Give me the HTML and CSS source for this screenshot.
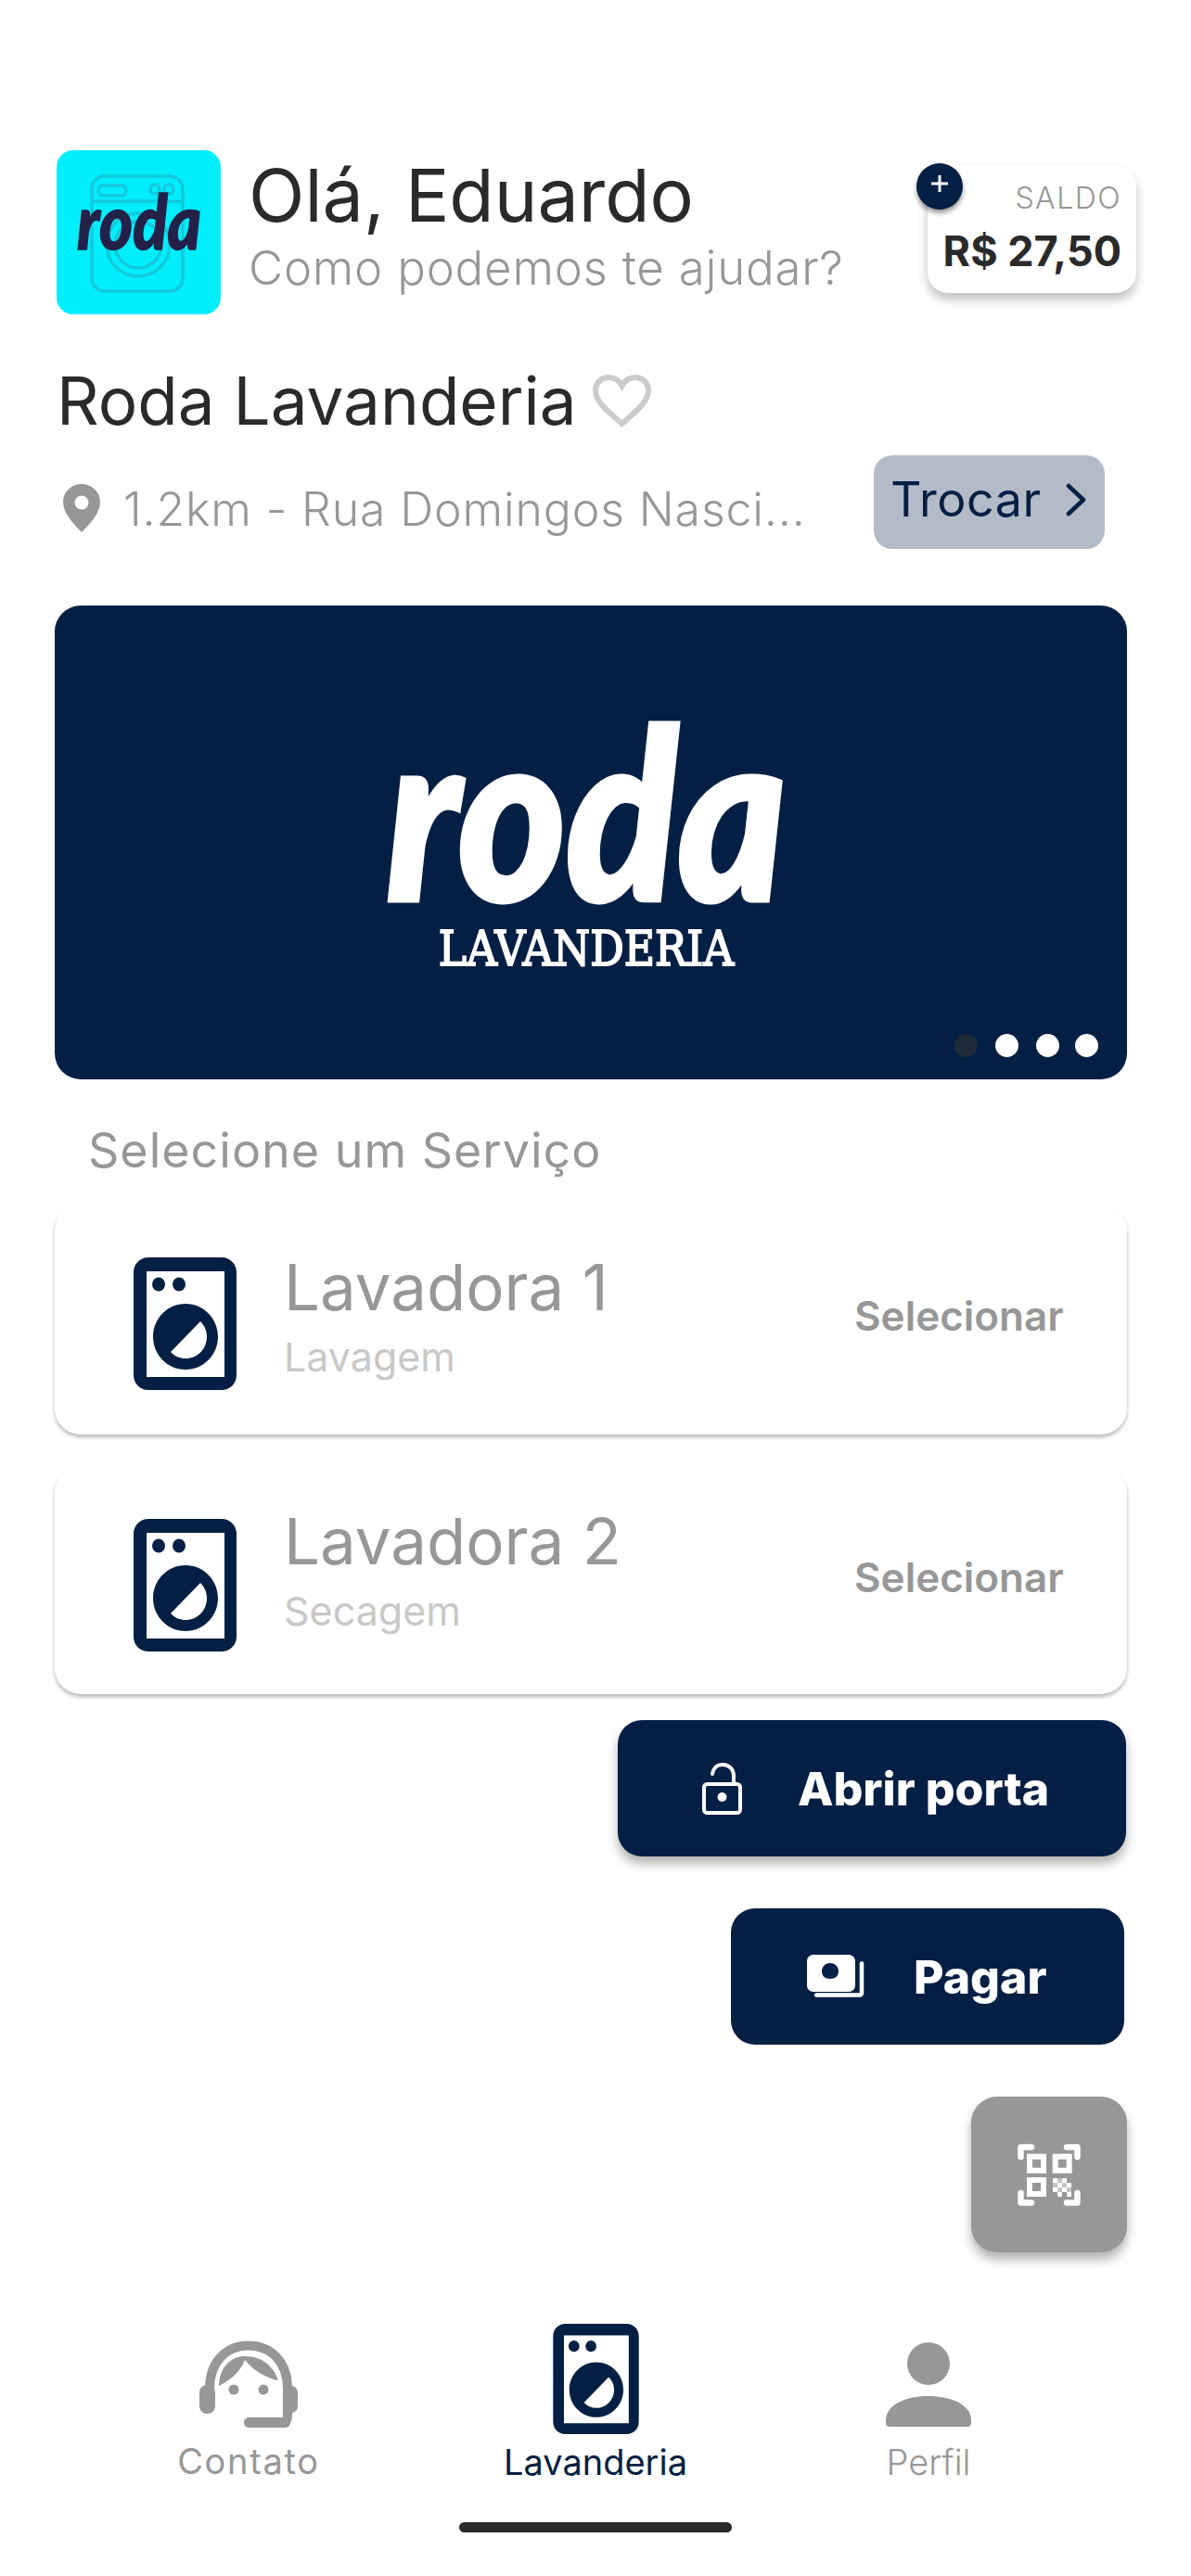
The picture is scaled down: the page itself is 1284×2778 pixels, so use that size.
FILE: index.html
```html
<!DOCTYPE html>
<html lang="pt-BR">
<head>
  <meta charset="UTF-8" />
  <meta name="viewport" content="width=device-width, initial-scale=1.0" />
  <title>Roda Lavanderia</title>
  <link rel="stylesheet" href="styles.css">
</head>
<body>
  <svg class="defs" width="0" height="0">
    <symbol id="washer" viewBox="0 0 111 143">
      <path fill-rule="evenodd" d="M16 0H95C104 0 111 7 111 16V127C111 136 104 143 95 143H16C7 143 0 136 0 127V16C0 7 7 0 16 0ZM14 15V129H98V15Z"/>
      <ellipse cx="27" cy="29" rx="7" ry="7.5"/>
      <ellipse cx="49" cy="29" rx="7" ry="7.5"/>
      <path fill-rule="evenodd" d="M56 50C75.500 50 91 66 91 85.500C91 105 75.500 121 56 121C36.500 121 21 105 21 85.500C21 66 36.500 50 56 50ZM72 69L40 102C45 107 50 109 56 109C69 109 79 98.500 79 85.500C79 79 76.500 73.500 72 69Z"/>
    </symbol>
  </svg>

  <div class="screen">
    <header class="top">
      <svg class="tile" viewBox="0 0 177 177">
        <rect width="177" height="177" rx="18" fill="#00eefc"/>
        <g fill="none" stroke="#12c9dc" stroke-width="3.500">
          <rect x="38" y="28" width="98" height="124" rx="14"/>
          <path d="M38 55H136"/>
          <rect x="45" y="38" width="30" height="11" rx="5.500"/>
          <circle cx="106" cy="42" r="5"/>
          <circle cx="121" cy="42" r="5"/>
          <circle cx="88" cy="102" r="34"/>
          <circle cx="88" cy="102" r="25"/>
        </g>
        <text class="tile-word" transform="translate(22 107) scale(0.84 1)">roda</text>
      </svg>
      <div class="greet">
        <h1>Olá, Eduardo</h1>
        <p>Como podemos te ajudar?</p>
      </div>
      <div class="saldo">
        <span class="plus"><svg viewBox="0 0 20 20" width="20" height="20"><path d="M10 1V19M1 10H19" stroke="#fff" stroke-width="3"/></svg></span>
        <span class="saldo-label">SALDO</span>
        <span class="saldo-value">R$ 27,50</span>
      </div>
    </header>

    <div class="place">
      <h2>Roda Lavanderia</h2>
      <svg class="heart" viewBox="0 0 65 59"><path d="M32.500 54C22 44 4 32 4 18C4 9.500 10.500 4 18 4C24 4 29.500 7.500 32.500 13C35.500 7.500 41 4 47 4C54.500 4 61 9.500 61 18C61 32 43 44 32.500 54Z" fill="none" stroke="#cbcbcb" stroke-width="6"/></svg>
    </div>

    <div class="address">
      <svg class="pin" viewBox="0 0 44 52"><path fill="#979797" fill-rule="evenodd" d="M22 0C33 0 42 8.500 42 19.500C42 31 31 43 22 52C13 43 2 31 2 19.500C2 8.500 11 0 22 0ZM22 12.500A7.500 7.500 0 1 0 22 27.500A7.500 7.500 0 1 0 22 12.500Z"/></svg>
      <span class="address-text">1.2km - Rua Domingos Nasci...</span>
      <button class="swap">Trocar
        <svg viewBox="0 0 24 36" width="24" height="36"><path d="M4 3L20 18L4 33" fill="none" stroke="#041f44" stroke-width="4.500" stroke-linecap="round" stroke-linejoin="round"/></svg>
      </button>
    </div>

    <section class="banner">
      <div class="brand-word">roda</div>
      <div class="brand-sub">LAVANDERIA</div>
      <div class="dots">
        <i class="dot off"></i><i class="dot"></i><i class="dot"></i><i class="dot last"></i>
      </div>
    </section>

    <h3 class="section-title">Selecione um Serviço</h3>

    <div class="service">
      <svg class="washer"><use href="#washer"/></svg>
      <div class="service-info">
        <div class="service-name">Lavadora 1</div>
        <div class="service-type">Lavagem</div>
      </div>
      <span class="service-pick">Selecionar</span>
    </div>

    <div class="service second">
      <svg class="washer"><use href="#washer"/></svg>
      <div class="service-info">
        <div class="service-name">Lavadora 2</div>
        <div class="service-type">Secagem</div>
      </div>
      <span class="service-pick">Selecionar</span>
    </div>

    <div class="actions">
      <button class="action door">
        <svg viewBox="0 0 43 56" width="43" height="56" fill="none" stroke="#fff" stroke-width="4"><rect x="2" y="23" width="39" height="31" rx="3.500"/><path d="M11 12C12 6 16 2 22 2C29 2 34 7 34 14V23" stroke-linecap="round"/><circle cx="21.500" cy="37" r="5" fill="#fff" stroke="none"/></svg>
        Abrir porta
      </button>
      <button class="action pay">
        <svg viewBox="0 0 63 47" width="63" height="47" fill="#fff"><path fill-rule="evenodd" d="M7 0H45C49 0 52 3 52 7V33C52 37 49 40 45 40H7C3 40 0 37 0 33V7C0 3 3 0 7 0ZM25 9C19.500 9 16 13 16 18C16 23 19.500 26 25 26C30.500 26 34 23 34 18C34 13 30.500 9 25 9Z"/><path d="M59 9.500V41C59 42.500 58 43.500 56.500 43.500H10" fill="none" stroke="#fff" stroke-width="4.500" stroke-linecap="round"/></svg>
        Pagar
      </button>
      <button class="qr">
        <svg viewBox="0 0 68 67" width="68" height="67">
          <g fill="none" stroke="#fff" stroke-width="6.500" stroke-linejoin="round" stroke-linecap="round">
            <path d="M3.500 14V3.500H15"/><path d="M53 3.500H64.500V14"/><path d="M3.500 53V63.500H15"/><path d="M64.500 53V63.500H53"/>
          </g>
          <g fill="none" stroke="#fff" stroke-width="6">
            <rect x="13" y="13.700" width="15" height="15"/>
            <rect x="40.700" y="13.700" width="15" height="15"/>
            <rect x="13" y="39" width="15" height="15"/>
          </g>
          <path fill="#fff" d="M38 37H43V42H38ZM48 37H53V42H48ZM43 42H48V47H43ZM53 42H58V47H53ZM38 47H43V52H38ZM48 47H53V52H48ZM43 52H48V57H43ZM53 52H58V57H53Z"/>
          <path fill="#fff" opacity=".45" d="M43 37H48V42H43ZM38 42H43V47H38ZM48 42H53V47H48ZM43 47H48V52H43ZM53 47H58V52H53Z"/>
        </svg>
      </button>
    </div>

    <nav class="tabs">
      <a class="tab contact">
        <svg class="tab-icon" viewBox="0 0 106 95" width="106" height="95">
          <path d="M11 52C11 22 30 5.500 53 5.500C76 5.500 95 22 95 52V80C95 86 93 89 88 89" fill="none" stroke="#979797" stroke-width="10"/>
          <rect x="0" y="48" width="17" height="31" rx="8" fill="#979797"/>
          <rect x="92" y="49" width="14" height="29" rx="7" fill="#979797"/>
          <rect x="48" y="83" width="50" height="11" rx="5.500" fill="#979797"/>
          <path d="M21 49C21 30 33 17 49 17C68 17 80 28 85 43C70 40 58 32 49 21C45 33 33 43 21 49Z" fill="#979797"/>
          <circle cx="37" cy="53" r="5.500" fill="#979797"/>
          <circle cx="69" cy="53" r="5.500" fill="#979797"/>
        </svg>
        <span>Contato</span>
      </a>
      <a class="tab current">
        <svg class="tab-washer"><use href="#washer"/></svg>
        <span>Lavanderia</span>
      </a>
      <a class="tab profile">
        <svg class="tab-icon" viewBox="0 0 92 91" width="92" height="91">
          <ellipse cx="46" cy="23" rx="23" ry="23" fill="#979797"/>
          <path d="M0 84C0 68 20 58 46 58C72 58 92 68 92 84V87C92 89.500 90.500 91 88 91H4C1.500 91 0 89.500 0 87Z" fill="#979797"/>
        </svg>
        <span>Perfil</span>
      </a>
    </nav>

    <div class="home-bar"></div>
  </div>
</body>
</html>
```

FILE: styles.css
```css
:root {
  --navy: #041f44;
  --grey: #979797;
  --ink: #2a2a2a;
}

* {
  margin: 0;
  padding: 0;
  box-sizing: border-box;
  font-family: "Inter", "Noto Sans", sans-serif;
}

html, body {
  width: 100%;
  height: 100%;
  background: #fff;
  color: var(--ink);
}

button {
  border: 0;
  cursor: pointer;
}

.defs {
  position: absolute;
}

.screen {
  width: 1284px;
  height: 2778px;
  padding-top: 162px;
  display: flex;
  flex-direction: column;
  overflow: hidden;
}

/* Header */
.top {
  display: flex;
  height: 177px;
  padding: 0 59px 0 61px;
}

.tile {
  width: 177px;
  height: 177px;
  flex: none;
}

.tile-word {
  font-family: "Lato", sans-serif;
  font-style: italic;
  font-weight: 900;
  font-size: 82px;
  fill: #232148;
  stroke: #232148;
  stroke-width: 1.5px;
}

.greet {
  margin-left: 30px;
}

.greet h1 {
  font-size: 79px;
  font-weight: 400;
  line-height: 90px;
  margin-top: 3px;
}

.greet p {
  font-size: 51px;
  font-weight: 300;
  letter-spacing: 0.75px;
  line-height: 60px;
  margin-top: 4px;
  color: var(--grey);
}

.saldo {
  position: relative;
  width: 225px;
  height: 138px;
  margin: 16px 0 0 auto;
  padding: 16px 16px 0 0;
  background: #fff;
  border-radius: 22px;
  box-shadow: 0 7px 11px rgba(0, 0, 0, 0.25);
  display: flex;
  flex-direction: column;
  align-items: flex-end;
}

.plus {
  position: absolute;
  left: -12px;
  top: -2px;
  width: 50px;
  height: 50px;
  border-radius: 50%;
  background: var(--navy);
  box-shadow: 0 4px 5px rgba(0, 0, 0, 0.4);
  display: flex;
  align-items: center;
  justify-content: center;
  padding-bottom: 6px;
}

.saldo-label {
  font-size: 32px;
  font-weight: 300;
  letter-spacing: 1.5px;
  line-height: 40px;
  color: var(--grey);
}

.saldo-value {
  font-size: 45px;
  font-weight: 700;
  line-height: 52px;
  margin-top: 11px;
  white-space: nowrap;
}

/* Place */
.place {
  display: flex;
  align-items: center;
  height: 80px;
  margin-top: 53px;
  padding-left: 61px;
}

.place h2 {
  font-size: 71px;
  font-weight: 400;
  line-height: 80px;
}

.heart {
  width: 65px;
  height: 59px;
  margin-left: 16px;
}

.address {
  display: flex;
  align-items: center;
  height: 101px;
  margin-top: 19px;
  padding-left: 66px;
}

.pin {
  width: 44px;
  height: 52px;
  margin-top: 12px;
}

.address-text {
  width: 809px;
  margin-left: 23px;
  font-size: 50px;
  font-weight: 300;
  letter-spacing: 0.85px;
  color: var(--grey);
  white-space: nowrap;
  margin-top: 15px;
}

.swap {
  width: 249px;
  height: 101px;
  border-radius: 20px;
  background: #b4bbc8;
  color: var(--navy);
  font-size: 52px;
  font-weight: 400;
  letter-spacing: 0.5px;
  display: flex;
  align-items: center;
  gap: 25px;
  padding: 0 0 6px 18px;
}

/* Banner */
.banner {
  position: relative;
  height: 511px;
  margin: 61px 69px 0 59px;
  padding-right: 10px;
  border-radius: 28px;
  background: var(--navy);
  color: #fff;
  text-align: center;
}

.brand-word {
  font-family: "Lato", sans-serif;
  font-style: italic;
  font-weight: 900;
  font-size: 255px;
  line-height: 220px;
  padding-top: 109px;
  height: 340px;
  transform: scaleX(0.87);
  -webkit-text-stroke: 5px #fff;
}

.brand-sub {
  font-family: "DejaVu Serif", serif;
  font-weight: 400;
  font-size: 53px;
  line-height: 60px;
  transform: scaleX(0.86);
  -webkit-text-stroke: 2px #fff;
}

.dots {
  position: absolute;
  right: 31px;
  bottom: 24px;
  display: flex;
}

.dot {
  display: block;
  width: 25px;
  height: 25px;
  margin-right: 19px;
  border-radius: 50%;
  background: #fff;
}

.dot.off {
  background: #1f2a3a;
}

.dot.last {
  margin-left: -2px;
  margin-right: 0;
}

/* Services */
.section-title {
  margin: 47px 0 0 95px;
  height: 89px;
  font-size: 52px;
  font-weight: 400;
  letter-spacing: 1px;
  line-height: 60px;
  color: var(--grey);
}

.service {
  display: flex;
  align-items: flex-start;
  height: 247px;
  margin: 0 69px 0 59px;
  padding: 56px 0 0 85px;
  background: #fff;
  border-radius: 28px;
  box-shadow: 0 3px 4px rgba(0, 0, 0, 0.28);
}

.service.second {
  height: 245px;
  margin-top: 35px;
}

.washer {
  width: 111px;
  height: 143px;
  fill: var(--navy);
  flex: none;
}

.service-info {
  width: 615px;
  margin-left: 51px;
}

.service-name {
  font-size: 69px;
  font-weight: 400;
  line-height: 80px;
  color: var(--grey);
  margin-top: -8px;
}

.service.second .service-name {
  margin-top: -16px;
}

.service-type {
  font-size: 43px;
  font-weight: 400;
  line-height: 50px;
  color: #c8c8c8;
  margin-top: 10px;
}

.service-pick {
  font-size: 44px;
  font-weight: 600;
  line-height: 50px;
  color: var(--grey);
  margin-top: 38px;
}

/* Actions */
.actions {
  display: flex;
  flex-direction: column;
  align-items: flex-end;
  margin-top: 28px;
  padding-right: 70px;
}

.action {
  display: flex;
  align-items: center;
  height: 147px;
  border-radius: 26px;
  background: var(--navy);
  color: #fff;
  font-size: 50px;
  font-weight: 800;
}

.door {
  width: 548px;
  padding-left: 91px;
  gap: 60px;
  box-shadow: 0 8px 12px rgba(0, 0, 0, 0.3);
}

.pay {
  width: 424px;
  margin: 56px 2px 0 0;
  padding-left: 82px;
  gap: 52px;
}

.qr {
  width: 168px;
  height: 168px;
  margin: 56px -1px 0 0;
  border-radius: 28px;
  background: var(--grey);
  box-shadow: 0 8px 12px rgba(0, 0, 0, 0.3);
  display: flex;
  align-items: center;
  justify-content: center;
}

/* Bottom tabs */
.tabs {
  display: grid;
  grid-template-columns: 536px 212px 506px;
  align-items: end;
  height: 168px;
  margin-top: 75px;
}

.tab {
  display: flex;
  flex-direction: column;
  align-items: center;
  font-size: 38px;
  font-weight: 300;
  line-height: 46px;
  color: var(--grey);
  white-space: nowrap;
}

.tab.contact {
  font-weight: 400;
  letter-spacing: 1.7px;
  margin-bottom: -5px;
}

.tab.profile {
  margin-bottom: -6px;
}

.tab.current {
  color: var(--navy);
  font-weight: 400;
  margin-bottom: -6px;
}

.tab-washer {
  width: 93px;
  height: 119px;
  fill: var(--navy);
  margin-bottom: 7px;
}

.tab.contact .tab-icon {
  margin-bottom: 12px;
}

.tab.profile .tab-icon {
  margin-bottom: 15px;
}

.home-bar {
  width: 294px;
  height: 11px;
  margin: 48px auto 0;
  border-radius: 6px;
  background: var(--ink);
}
```
